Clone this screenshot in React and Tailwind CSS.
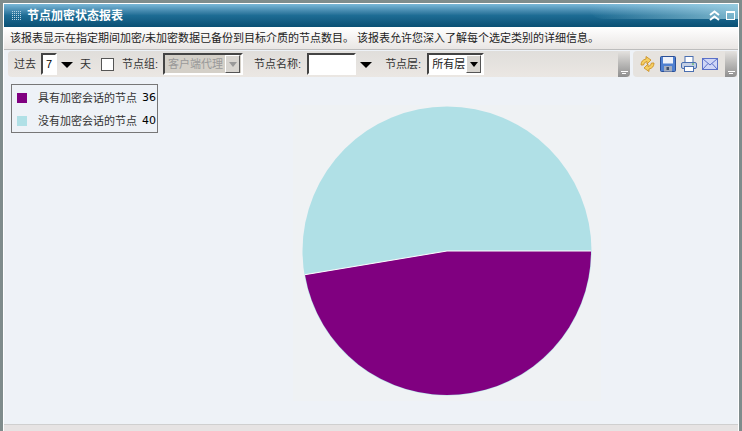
// App.jsx - node encryption status report panel
import React from 'react';

const cjk = "font-['Liberation_Sans','Noto_Sans_CJK_SC',sans-serif]";

const legend = [
  { label: '具有加密会话的节点', value: 36, color: 'bg-[#800080]' },
  { label: '没有加密会话的节点', value: 40, color: 'bg-[#b0e0e6]' },
];

const Caret = () => <span className="block w-0 h-0 mt-px border-x-[6px] border-x-transparent border-t-[6px] border-t-black" />;

const Grip = () => (
  <svg width="10" height="10" viewBox="0 0 10 10">
    {[1, 3, 5, 7, 9].map((x) => [1, 3, 5, 7, 9].map((y) => <rect key={`${x}-${y}`} x={x - 1} y={y - 1} width="1" height="1" fill="#b5d3e2" />))}
  </svg>
);

const DropButton = ({ disabled }) => (
  <span className="w-[15px] h-[18px] mr-px flex items-center justify-center bg-[#d8d5d0] border border-t-white border-l-white border-r-[#555] border-b-[#555]">
    <span className={`w-0 h-0 border-x-4 border-x-transparent border-t-[5px] ${disabled ? 'border-t-[#999]' : 'border-t-black'}`} />
  </span>
);

const Overflow = () => (
  <div className="w-[12px] ml-auto self-stretch rounded-r bg-gradient-to-b from-[#e4e2df] to-[#8f8f8f] flex flex-col items-end justify-end pb-[3px] pr-[2px] gap-px">
    <span className="w-[7px] h-px bg-white" />
    <span className="w-[4px] h-px bg-white mr-[2px]" />
  </div>
);

const SyncIcon = () => (
  <svg width="15" height="18" viewBox="0 0 15 18" stroke="#c98a1a" strokeWidth="0.8" fill="#f5cf62">
    <path d="M1 10 Q1 5 6 4 L6 1.5 L11 5 L7 9 L7 6.5 Q4 7 3.5 10 Z" />
    <path d="M14 8 Q14 13 9 14 L9 16.5 L4 13 L8 9 L8 11.5 Q11 11 11.5 8 Z" />
  </svg>
);

const SaveIcon = () => (
  <svg width="16" height="16" viewBox="0 0 16 16">
    <rect x="0.5" y="0.5" width="15" height="15" rx="1" fill="#4f80d0" stroke="#2a4f96" />
    <rect x="3" y="1" width="10" height="6.5" fill="#eef2fa" />
    <rect x="4" y="10" width="8" height="5.5" fill="#a4aebf" />
    <rect x="6.5" y="11" width="2.5" height="3" fill="#3f4f6a" />
  </svg>
);

const PrintIcon = () => (
  <svg width="16" height="16" viewBox="0 0 16 16">
    <rect x="4" y="0.5" width="8" height="7" fill="#fff" stroke="#4a6fb0" />
    <rect x="0.5" y="6.5" width="15" height="6" rx="1.5" fill="#c4cfe4" stroke="#4a6fb0" />
    <rect x="3.5" y="10.5" width="9" height="5" fill="#fff" stroke="#4a6fb0" />
    <rect x="11" y="7.5" width="2" height="1" fill="#45b045" />
  </svg>
);

const MailIcon = () => (
  <svg width="16" height="12" viewBox="0 0 16 12">
    <rect x="0.5" y="0.5" width="15" height="11" fill="#cfd6f6" stroke="#5a70c8" />
    <path d="M0.5 0.5 L8 7 L15.5 0.5 M0.5 11.5 L6 5.5 M15.5 11.5 L10 5.5" fill="none" stroke="#5a70c8" />
  </svg>
);

// purple slice runs clockwise from east, 36 of 76 parts of the circle
const Pie = () => {
  const end = (36 / 76) * 2 * Math.PI;
  const x = 154 + 144 * Math.cos(end);
  const y = 146 + 144 * Math.sin(end);
  return (
    <svg width="308" height="296" viewBox="0 0 308 296" className="bg-[#eff2f4]">
      <circle cx="154" cy="146" r="144.5" fill="#b0e0e6" />
      <path d={`M154 146 L298 146 A144 144 0 0 1 ${x} ${y} Z`} fill="#800080" />
      <path d={`M${x} ${y} L154 146 L298 146`} fill="none" stroke="#fff" strokeWidth="1" />
    </svg>
  );
};

export default function App() {
  return (
    <div className={`w-[742px] h-[431px] overflow-hidden flex flex-col bg-[#7f8c8c] pt-[3px] pl-[3px] pr-[3px] text-[11px] text-[#333] ${cjk}`}>
      <div className="flex-1 min-h-0 flex flex-col bg-[#eef2f7] border-l border-t border-r border-white">
        {/* Title bar */}
        <div className="h-[23px] shrink-0 flex items-center pl-2 pr-[3px] bg-gradient-to-b from-[#7ab8d8] via-[#1d6c94] to-[#0a5074] relative overflow-hidden">
          <Grip />
          <span className="ml-[5px] text-white font-bold text-[12px]">节点加密状态报表</span>
          <div className="absolute right-0 top-0 w-[150px] h-[15px] bg-gradient-to-r from-transparent to-[#a5d6e6] opacity-70 rounded-bl-[70px]" />
          <div className="relative ml-auto flex items-center gap-[6px]">
            <svg width="11" height="11" viewBox="0 0 11 11" fill="none" stroke="#fff" strokeWidth="2">
              <path d="M1 5 L5.5 1.5 L10 5 M1 10 L5.5 6.5 L10 10" />
            </svg>
            <span className="w-[9px] h-[9px] border border-white border-t-2" />
          </div>
        </div>

        {/* Description */}
        <div className="h-[23px] shrink-0 flex items-center pl-[6px] bg-gradient-to-b from-white to-[#e9e6e4] border-b border-[#bdbdbd] text-[#222]">
          该报表显示在指定期间加密/未加密数据已备份到目标介质的节点数目。 该报表允许您深入了解每个选定类别的详细信息。
        </div>

        {/* Toolbar */}
        <div className="h-[28px] shrink-0 flex gap-[3px] pl-[4px] pr-px pt-[1px] pb-px">
          <div className="w-[622px] flex items-center pl-[6px] rounded-l bg-gradient-to-b from-[#e0dedb] to-[#ebe7e3]">
            <span>过去</span>
            <span className="ml-[5px] w-[16px] h-[22px] flex items-center justify-center bg-white border-2 border-[#444] border-r-white border-b-white text-black">7</span>
            <span className="ml-[4px]"><Caret /></span>
            <span className="ml-[7px]">天</span>
            <span className="ml-[10px] w-[13px] h-[13px] bg-white border border-[#555]" />
            <span className="ml-[8px]">节点组:</span>
            <span className="ml-[5px] w-[80px] h-[22px] flex items-center justify-between pl-[3px] bg-[#d4d0c8] border-2 border-[#444] border-r-white border-b-white text-[#9a9a9a]">
              客户端代理<DropButton disabled />
            </span>
            <span className="ml-[11px]">节点名称:</span>
            <span className="ml-[6px] w-[49px] h-[22px] bg-white border-2 border-[#444] border-r-white border-b-white" />
            <span className="ml-[4px]"><Caret /></span>
            <span className="ml-[13px]">节点层:</span>
            <span className="ml-[6px] w-[57px] h-[22px] flex items-center justify-between pl-[3px] bg-white border-2 border-[#444] border-r-white border-b-white text-[#222]">
              所有层<DropButton />
            </span>
            <Overflow />
          </div>
          <div className="w-[104px] flex items-center gap-[5px] pl-[7px] rounded-l bg-[#e6e3df]">
            <SyncIcon />
            <SaveIcon />
            <PrintIcon />
            <MailIcon />
            <Overflow />
          </div>
        </div>

        {/* Chart area */}
        <div className="relative flex-1 min-h-0 flex justify-end pr-[137px] pt-[27px]">
          <div className="absolute left-[7px] top-[6px] w-[147px] h-[49px] border border-[#777] bg-[#eef2f7] flex flex-col gap-[5px] pt-[4px] pl-[5px]">
            {legend.map((item) => (
              <div key={item.label} className="h-[18px] flex items-center">
                <span className={`w-[10px] h-[10px] ${item.color}`} />
                <span className="ml-[11px] w-[104px]">{item.label}</span>
                <span className="mt-px text-[11px] text-black font-['DejaVu_Sans',sans-serif]">{item.value}</span>
              </div>
            ))}
          </div>
          <div className="h-fit"><Pie /></div>
        </div>

        {/* Footer */}
        <div className="h-[7px] shrink-0 bg-[#e6e3e3] border-t border-[#cfcfcf]" />
      </div>
    </div>
  );
}
